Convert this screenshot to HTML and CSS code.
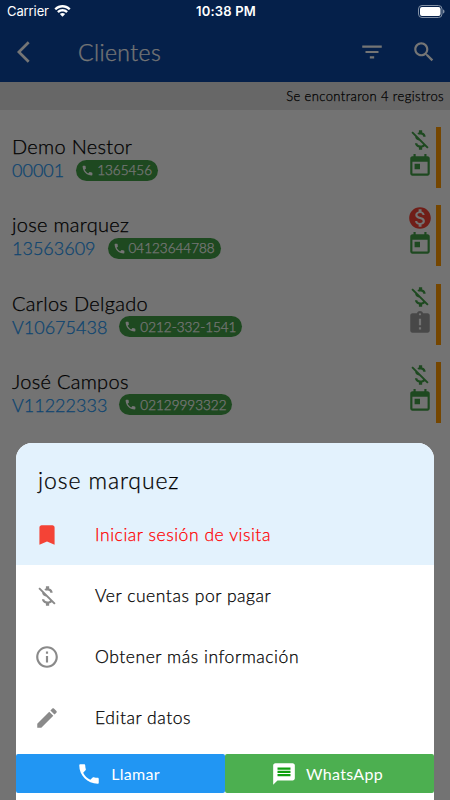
FILE: index.html
```
<!DOCTYPE html>
<html lang="es">
  <head>
    <meta charset="UTF-8" />
    <meta name="viewport" content="width=device-width, initial-scale=1.0" />
    <title>Clientes</title>
    <link rel="stylesheet" href="styles.css">
  </head>
  <body>
    <svg class="sprite" aria-hidden="true">
      <symbol id="money-off" viewBox="0 0 24 24"><path d="M12.5 6.9c1.78 0 2.44.85 2.5 2.1h2.21c-.07-1.72-1.12-3.3-3.21-3.81V3h-3v2.16c-.53.12-1.03.3-1.48.54l1.47 1.47c.41-.17.91-.27 1.51-.27zM5.33 4.06L4.06 5.33 7.5 8.77c0 2.08 1.56 3.21 3.91 3.91l3.51 3.51c-.34.48-1.05.91-2.42.91-2.06 0-2.87-.92-2.98-2.1h-2.2c.12 2.19 1.76 3.42 3.68 3.83V21h3v-2.15c.96-.18 1.82-.55 2.45-1.12l2.22 2.22 1.27-1.27L5.33 4.06z"/></symbol>
      <symbol id="money-on" viewBox="0 0 24 24"><path d="M12 2C6.48 2 2 6.48 2 12s4.48 10 10 10 10-4.48 10-10S17.52 2 12 2zm1.41 16.09V20h-2.67v-1.93c-1.71-.36-3.16-1.46-3.27-3.4h1.96c.1 1.05.82 1.87 2.65 1.87 1.96 0 2.4-.98 2.4-1.59 0-.83-.44-1.61-2.67-2.14-2.48-.6-4.18-1.62-4.18-3.67 0-1.72 1.39-2.84 3.11-3.21V4h2.67v1.95c1.86.45 2.79 1.86 2.85 3.39H14.3c-.05-1.11-.64-1.87-2.22-1.87-1.5 0-2.4.68-2.4 1.64 0 .84.65 1.39 2.67 1.91s4.18 1.39 4.18 3.91c-.01 1.83-1.38 2.83-3.12 3.16z"/></symbol>
      <symbol id="calendar" viewBox="0 0 24 24"><path d="M19 3h-1V1h-2v2H8V1H6v2H5c-1.11 0-1.99.9-1.99 2L3 19c0 1.1.89 2 2 2h14c1.1 0 2-.9 2-2V5c0-1.1-.9-2-2-2zm0 16H5V8h14v11zM7 10h5v5H7z"/></symbol>
      <symbol id="late" viewBox="0 0 24 24"><path d="M19 3h-4.18C14.4 1.84 13.3 1 12 1c-1.3 0-2.4.84-2.82 2H5c-1.1 0-2 .9-2 2v14c0 1.1.9 2 2 2h14c1.1 0 2-.9 2-2V5c0-1.1-.9-2-2-2zm-6 15h-2v-2h2v2zm0-4h-2V8h2v6zm-1-9c-.55 0-1-.45-1-1s.45-1 1-1 1 .45 1 1-.45 1-1 1z"/></symbol>
      <symbol id="phone" viewBox="0 0 24 24"><path d="M6.62 10.79c1.44 2.83 3.76 5.14 6.59 6.59l2.2-2.2c.27-.27.67-.36 1.02-.24 1.12.37 2.33.57 3.57.57.55 0 1 .45 1 1V20c0 .55-.45 1-1 1-9.39 0-17-7.61-17-17 0-.55.45-1 1-1h3.5c.55 0 1 .45 1 1 0 1.25.2 2.45.57 3.57.11.35.03.74-.25 1.02l-2.2 2.2z"/></symbol>
    </svg>

    <div class="app">
      <header class="app-bar">
        <svg class="icon back" viewBox="0 0 24 24"><path d="M11.67 3.87L9.9 2.1 0 12l9.9 9.9 1.77-1.77L3.54 12z"/></svg>
        <h1 class="app-title">Clientes</h1>
        <svg class="icon filter" viewBox="0 0 24 24"><path d="M10 18h4v-2h-4v2zM3 6v2h18V6H3zm3 7h12v-2H6v2z"/></svg>
        <svg class="icon" viewBox="0 0 24 24"><path d="M15.5 14h-.79l-.28-.27C15.41 12.59 16 11.11 16 9.5 16 5.91 13.09 3 9.5 3S3 5.91 3 9.5 5.91 16 9.5 16c1.61 0 3.09-.59 4.23-1.57l.27.28v.79l5 4.99L20.49 19l-4.99-5zm-6 0C7.01 14 5 11.99 5 9.5S7.01 5 9.5 5 14 7.01 14 9.5 11.99 14 9.5 14z"/></svg>
      </header>
      <p class="count">Se encontraron 4 registros</p>

      <ul class="clients">
        <li class="client">
          <div class="info">
            <h2 class="name">Demo Nestor</h2>
            <div class="details">
              <span class="code">00001</span>
              <span class="chip"><svg><use href="#phone"/></svg>1365456</span>
            </div>
          </div>
          <div class="status">
            <svg class="icon green"><use href="#money-off"/></svg>
            <svg class="icon green"><use href="#calendar"/></svg>
          </div>
        </li>
        <li class="client">
          <div class="info">
            <h2 class="name">jose marquez</h2>
            <div class="details">
              <span class="code">13563609</span>
              <span class="chip"><svg><use href="#phone"/></svg>04123644788</span>
            </div>
          </div>
          <div class="status">
            <svg class="icon red"><use href="#money-on"/></svg>
            <svg class="icon green"><use href="#calendar"/></svg>
          </div>
        </li>
        <li class="client">
          <div class="info">
            <h2 class="name">Carlos Delgado</h2>
            <div class="details">
              <span class="code">V10675438</span>
              <span class="chip"><svg><use href="#phone"/></svg>0212-332-1541</span>
            </div>
          </div>
          <div class="status">
            <svg class="icon green"><use href="#money-off"/></svg>
            <svg class="icon gray"><use href="#late"/></svg>
          </div>
        </li>
        <li class="client">
          <div class="info">
            <h2 class="name">José Campos</h2>
            <div class="details">
              <span class="code">V11222333</span>
              <span class="chip"><svg><use href="#phone"/></svg>02129993322</span>
            </div>
          </div>
          <div class="status">
            <svg class="icon green"><use href="#money-off"/></svg>
            <svg class="icon green"><use href="#calendar"/></svg>
          </div>
        </li>
      </ul>
    </div>

    <div class="scrim"></div>

    <div class="status-bar">
      <span class="carrier">Carrier
        <svg class="wifi" viewBox="0 0 17 12"><path d="M8.5 2.4c2.4 0 4.6.9 6.2 2.5.1.1.3.1.4 0l1.2-1.2c.2-.2.2-.4 0-.5C12-1 5-1 .7 3.2c-.2.1-.2.3 0 .5l1.2 1.2c.1.1.3.1.4 0C3.9 3.3 6.1 2.4 8.5 2.4zm0 4c1.3 0 2.6.5 3.5 1.4.2.1.3.1.5 0l1.2-1.3c.1-.1.1-.3 0-.4-2.9-2.8-7.5-2.8-10.4 0-.1.1-.1.3 0 .4l1.2 1.3c.2.1.3.1.5 0 .9-.9 2.2-1.4 3.5-1.4zm2.4 2.8c.1-.1.1-.3 0-.4-1.4-1.2-3.4-1.2-4.8 0-.1.1-.1.3 0 .4l2.1 2.2c.2.2.4.2.6 0z"/></svg>
      </span>
      <span class="time">10:38 PM</span>
      <svg class="battery" viewBox="0 0 27 13"><rect x=".5" y=".5" width="23.5" height="12" rx="3.5"/><rect class="charge" x="2" y="2" width="20.5" height="9" rx="2"/><path class="charge tip" d="M25 4.5c1 .4 1.5 1.1 1.5 2s-.5 1.6-1.5 2z"/></svg>
    </div>

    <section class="sheet">
      <div class="highlight">
        <h2 class="sheet-title">jose marquez</h2>
        <a class="option visit">
          <svg class="icon" viewBox="0 0 24 24"><path d="M17 3H7c-1.1 0-1.99.9-1.99 2L5 21l7-3 7 3V5c0-1.1-.9-2-2-2z"/></svg>
          <span>Iniciar sesión de visita</span>
        </a>
      </div>
      <a class="option">
        <svg class="icon"><use href="#money-off"/></svg>
        <span>Ver cuentas por pagar</span>
      </a>
      <a class="option">
        <svg class="icon" viewBox="0 0 24 24"><path d="M11 17h2v-6h-2v6zm1-15C6.48 2 2 6.48 2 12s4.48 10 10 10 10-4.48 10-10S17.52 2 12 2zm0 18c-4.41 0-8-3.59-8-8s3.59-8 8-8 8 3.59 8 8-3.59 8-8 8zM11 9h2V7h-2v2z"/></svg>
        <span>Obtener más información</span>
      </a>
      <a class="option">
        <svg class="icon" viewBox="0 0 24 24"><path d="M3 17.25V21h3.75L17.81 9.94l-3.75-3.75L3 17.25zM20.71 7.04c.39-.39.39-1.02 0-1.41l-2.34-2.34c-.39-.39-1.02-.39-1.41 0l-1.83 1.83 3.75 3.75 1.83-1.83z"/></svg>
        <span>Editar datos</span>
      </a>
      <div class="actions">
        <button class="action call"><svg class="icon"><use href="#phone"/></svg>Llamar</button>
        <button class="action whatsapp">
          <svg class="icon" viewBox="0 0 24 24"><path class="lines" d="M5 5h14v10H5z"/><path d="M20 2H4c-1.1 0-1.99.9-1.99 2L2 22l4-4h14c1.1 0 2-.9 2-2V4c0-1.1-.9-2-2-2zM6 9h12v2H6V9zm12 5H6v-2h12v2zm0-6H6V6h12v2z"/></svg>WhatsApp
        </button>
      </div>
    </section>
  </body>
</html>
```
FILE: styles.css
```
* {
  box-sizing: border-box;
}

body {
  position: relative;
  width: 450px;
  height: 800px;
  margin: 0;
  overflow: hidden;
  background-color: #fafafa;
  font-family: Lato, sans-serif;
  font-weight: 300;
  color: #000;
  -webkit-text-stroke: 0.25px;
}

h1,
h2,
p,
ul {
  margin: 0;
  padding: 0;
  font-weight: 300;
}

.sprite {
  display: none;
}

.icon {
  display: block;
  flex: none;
  width: 26px;
  height: 26px;
  fill: currentColor;
}

/* top bar */
.app-bar {
  display: flex;
  align-items: center;
  height: 82px;
  padding: 22px 13px 0 17px;
  background-color: #0d47a1;
  color: #fff;
}

.app-title {
  flex: 1;
  margin-left: 35px;
  font-size: 23px;
  letter-spacing: 0.4px;
}

.filter {
  margin-right: 26px;
}

.count {
  height: 28px;
  padding-right: 6px;
  background-color: #e0e0e0;
  font-size: 13px;
  letter-spacing: 0.4px;
  line-height: 29px;
  text-align: right;
}

/* client list */
.clients {
  display: flex;
  flex-direction: column;
  gap: 17.3px;
  padding: 17px 9px 0 12px;
  list-style: none;
}

.client {
  display: flex;
  justify-content: space-between;
  height: 61px;
  border-right: 5px solid #ff9800;
}

.info {
  padding-top: 7px;
}

.name {
  height: 25px;
  font-size: 20px;
  line-height: 24px;
  letter-spacing: 0.3px;
}

.details {
  display: flex;
  align-items: center;
  gap: 12px;
  height: 22px;
}

.code {
  color: #2196f3;
  font-size: 18px;
}

.chip {
  display: flex;
  align-items: center;
  gap: 3px;
  height: 21px;
  padding: 0 6px 0 5px;
  border-radius: 11px;
  background-color: #43a047;
  color: #fff;
  font-size: 13.5px;
}

.chip svg {
  width: 13px;
  height: 13px;
  fill: #fff;
}

.status {
  margin-right: 3px;
}

.green {
  color: #43a047;
}

.red {
  color: #f44336;
}

.gray {
  color: #9e9e9e;
}

.scrim {
  position: absolute;
  inset: 0;
  background-color: rgba(0, 0, 0, 0.54);
}

/* system status bar stays bright above the scrim */
.status-bar {
  position: absolute;
  top: 0;
  left: 0;
  display: grid;
  grid-template-columns: 1fr auto 1fr;
  align-items: center;
  width: 450px;
  height: 22px;
  padding: 0 5px 0 7px;
  color: #fff;
  font-family: Inter, sans-serif;
  font-size: 13px;
  font-weight: 400;
  -webkit-text-stroke: 0;
}

.carrier {
  display: flex;
  align-items: center;
  gap: 5px;
  letter-spacing: -0.1px;
}

.wifi {
  width: 17px;
  height: 12px;
  fill: #fff;
}

.time {
  font-weight: 600;
  letter-spacing: 0.2px;
}

.battery {
  justify-self: end;
  width: 27px;
  height: 13px;
  fill: none;
  stroke: #8290a5;
}

.battery .charge {
  fill: #fff;
  stroke: none;
}

.battery .tip {
  fill: #8290a5;
}

/* bottom sheet */
.sheet {
  position: absolute;
  top: 443px;
  left: 16px;
  width: 418px;
  height: 357px;
  overflow: hidden;
  border-radius: 16px 16px 0 0;
  background-color: #fff;
}

.highlight {
  height: 122px;
  background-color: #e3f2fd;
}

.sheet-title {
  height: 61px;
  padding: 22px 0 0 22px;
  font-size: 23px;
  line-height: 30px;
  letter-spacing: 0.9px;
}

.option {
  display: flex;
  align-items: center;
  gap: 35px;
  height: 61px;
  padding-left: 18px;
  font-size: 17.5px;
  letter-spacing: 0.55px;
}

.option .icon {
  color: #8a8a8a;
}

.visit {
  color: #f00;
}

.visit .icon {
  color: #f44336;
}

.actions {
  display: flex;
  padding-top: 6px;
}

.action {
  display: flex;
  align-items: center;
  justify-content: center;
  gap: 9px;
  width: 50%;
  height: 39px;
  padding: 0 5px 0 0;
  border: 0;
  border-radius: 2px;
  color: #fff;
  font-family: inherit;
  font-size: 16px;
  letter-spacing: 0.3px;
  -webkit-text-stroke: 0;
}

.call {
  background-color: #2196f3;
}

.whatsapp {
  background-color: #4caf50;
}

.lines {
  fill: #10a010;
}
```
